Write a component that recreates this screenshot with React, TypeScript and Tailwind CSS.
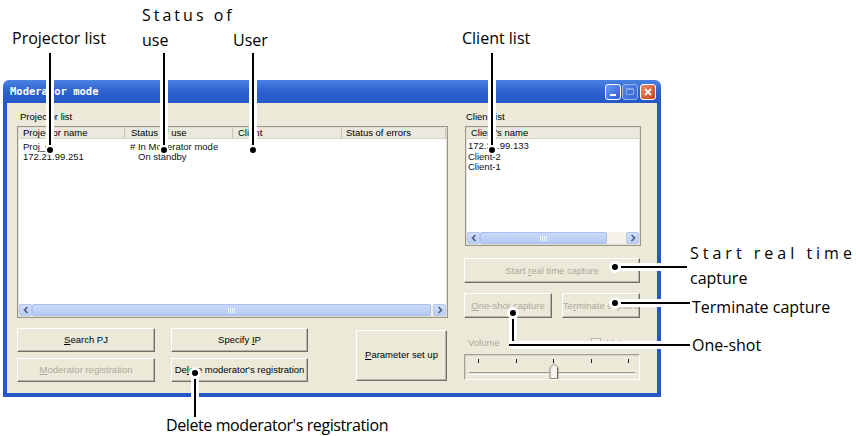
import type { ReactNode } from "react"

const UI = "font-['Liberation_Sans',Arial,sans-serif]"
const NOTE = "font-['Open_Sans',sans-serif] text-[16px] leading-[20px] text-black whitespace-nowrap"

function Btn({ children, disabled = false, className = "" }: { children: ReactNode; disabled?: boolean; className?: string }) {
  return (
    <div
      className={`flex items-center justify-center border border-t-white border-l-white border-r-[#716f64] border-b-[#716f64] bg-[#ECE9D8] shadow-[inset_-1px_-1px_0_#b9b6a8] text-[9.5px] leading-none whitespace-pre ${
        disabled ? "text-[#ADAA9C]" : "text-black"
      } ${className}`}
    >
      <span>{children}</span>
    </div>
  )
}

function Arrow({ dir }: { dir: "left" | "right" }) {
  return (
    <div className="w-[13px] h-full flex items-center justify-center rounded-[2px] border border-[#b3c6f0] bg-linear-to-b from-[#d3dffb] to-[#bccdf5]">
      <svg width="6" height="8" viewBox="0 0 6 8">
        <path
          d={dir === "left" ? "M4.5 1 L1.5 4 L4.5 7" : "M1.5 1 L4.5 4 L1.5 7"}
          fill="none"
          stroke="#4d6185"
          strokeWidth="1.7"
        />
      </svg>
    </div>
  )
}

function Thumb({ className }: { className: string }) {
  return (
    <div
      className={`h-full flex items-center justify-center gap-[1px] rounded-[2px] border border-[#a9bff0] bg-linear-to-b from-[#cddbfa] to-[#b5c9f3] ${className}`}
    >
      <div className="w-[1px] h-[5px] bg-[#eef3fe]" />
      <div className="w-[1px] h-[5px] bg-[#eef3fe]" />
      <div className="w-[1px] h-[5px] bg-[#eef3fe]" />
      <div className="w-[1px] h-[5px] bg-[#eef3fe]" />
    </div>
  )
}

function Header({ children, className = "" }: { children: ReactNode; className?: string }) {
  return (
    <div className={`h-full pl-[4px] border-r border-[#c7c4b6] shadow-[inset_0_-1px_0_#d8d5c7] ${className}`}>{children}</div>
  )
}

function Tick() {
  return <div className="w-[1px] h-[4px] bg-[#222]" />
}

export default function App() {
  return (
    <div className={`relative w-[856px] h-[436px] overflow-hidden bg-white pt-[80px] pl-[3px] ${UI}`}>
      {/* Window */}
      <div className="flex flex-col w-[658px] h-[317px]">
        <div className="flex items-center h-[23px] rounded-t-[6px] bg-linear-to-b from-[#4a82e2] via-[#2c62cc] to-[#2558c6] pl-[7px] pr-[5px]">
          <span className="font-['DejaVu_Sans_Mono',monospace] font-bold text-[10.5px] text-white">Moderator mode</span>
          <div className="ml-auto flex gap-[1px]">
            <div className="w-[16px] h-[16px] flex items-end pl-[4px] pb-[3px] rounded-[3px] border border-white bg-linear-to-br from-[#6b9bf2] to-[#2c5fd6]">
              <div className="w-[6px] h-[2px] bg-white" />
            </div>
            <div className="w-[16px] h-[16px] flex items-center justify-center rounded-[3px] border border-[#9ab6ee] bg-linear-to-br from-[#5787e6] to-[#3566d4]">
              <div className="w-[8px] h-[7px] border border-t-2 border-[#86a6ea]" />
            </div>
            <div className="ml-[1px] w-[16px] h-[16px] flex items-center justify-center rounded-[3px] border border-white bg-linear-to-br from-[#ec8d66] to-[#c8401c]">
              <svg width="8" height="8" viewBox="0 0 8 8">
                <path d="M1 1 L7 7 M7 1 L1 7" stroke="white" strokeWidth="1.8" />
              </svg>
            </div>
          </div>
        </div>

        <div className="flex-1 flex bg-[#ECE9D8] border-x-4 border-b-4 border-[#2558c6] pl-[10px] pt-[9px] text-[9.5px]">
          {/* Projector side */}
          <div className="w-[431px] flex flex-col">
            <div className="h-[10px] leading-[10px] pl-[3px] text-black">Projector list</div>
            <div className="mt-[4px] h-[192px] flex flex-col border border-[#9a978a] p-[1px] bg-[#e2dfd3]">
              <div className="flex h-[11px] leading-[10px] bg-[#EBE9DE] text-black">
                <Header className="w-[106px]">Projector name</Header>
                <Header className="w-[108px] pl-[6px]">Status of use</Header>
                <Header className="w-[109px] pl-[5px]">Client</Header>
                <Header className="flex-1">Status of errors</Header>
              </div>
              <div className="flex-1 flex bg-white pt-[3px] leading-[10px] text-[#111]">
                <div className="w-[106px] pl-[4px]">
                  <div>Proj_0</div>
                  <div>172.21.99.251</div>
                </div>
                <div className="w-[108px] pl-[5px]">
                  <div># In Moderator mode</div>
                  <div className="pl-[8px]">On standby</div>
                </div>
              </div>
              <div className="flex h-[12px] bg-[#F4F2EA]">
                <Arrow dir="left" />
                <Thumb className="w-[399px]" />
                <div className="w-[2px]" />
                <Arrow dir="right" />
              </div>
            </div>

            <div className="mt-[10px] flex">
              <div className="w-[138px] flex flex-col gap-[6px]">
                <Btn className="h-[24px]">
                  <span className="underline">S</span>earch PJ
                </Btn>
                <Btn disabled className="h-[24px]">
                  <span className="underline">M</span>oderator registration
                </Btn>
              </div>
              <div className="ml-[16px] w-[137px] flex flex-col gap-[6px]">
                <Btn className="h-[24px]">
                  Specify <span className="underline">I</span>P
                </Btn>
                <Btn className="h-[24px]">
                  De<span className="underline">l</span>ete moderator's registration
                </Btn>
              </div>
              <Btn className="ml-[48px] w-[91px] h-[51px] self-center">
                <span className="underline">P</span>arameter set up
              </Btn>
            </div>
          </div>

          {/* Client side */}
          <div className="ml-[16px] w-[177px] flex flex-col">
            <div className="h-[10px] leading-[10px] pl-[2px] text-black">Client list</div>
            <div className="ml-[1px] mt-[4px] h-[120px] flex flex-col border border-[#9a978a] p-[1px] bg-[#e2dfd3]">
              <div className="flex h-[11px] leading-[10px] bg-[#EBE9DE] text-black">
                <Header className="flex-1 border-r-0">Client's name</Header>
              </div>
              <div className="flex-1 bg-white pt-[2px] pl-[1px] leading-[10.5px] text-[#111]">
                <div>172.21.99.133</div>
                <div>Client-2</div>
                <div>Client-1</div>
              </div>
              <div className="flex h-[12px] bg-[#F4F2EA]">
                <Arrow dir="left" />
                <Thumb className="w-[127px]" />
                <div className="flex-1" />
                <Arrow dir="right" />
              </div>
            </div>

            <Btn disabled className="mt-[12px] h-[25px] w-[176px]">
              Start <span className="underline">r</span>eal time capture
            </Btn>
            <div className="mt-[10px] flex gap-[10px]">
              <Btn disabled className="w-[88px] h-[25px]">
                <span className="underline">O</span>ne-shot capture
              </Btn>
              <Btn disabled className="w-[78px] h-[25px]">
                Te<span className="underline">r</span>minate capture
              </Btn>
            </div>

            <div className="mt-[19px] h-[12px] flex items-center text-[#ADAA9C]">
              <span className="pl-[4px]">Volume</span>
              <div className="ml-auto mr-[14px] flex items-center gap-[5px]">
                <div className="w-[10px] h-[10px] border border-[#b8b5a8] bg-[#f3f2ec]" />
                <span>Mute</span>
              </div>
            </div>

            <div className="relative mt-[5px] w-[176px] h-[26px] border border-t-[#a5a294] border-l-[#a5a294] border-b-white border-r-white shadow-[inset_1px_1px_0_#d6d3c6]">
              <div className="mt-[4px] flex justify-between pl-[13px] pr-[10px]">
                <Tick />
                <Tick />
                <Tick />
                <Tick />
                <Tick />
              </div>
              <div className="mt-[9px] mx-[4px] h-[3px] border-t border-[#9d9a8d] border-b border-b-white bg-[#e4e1d5]" />
              <svg className="absolute left-[84px] top-[8px]" width="10" height="16" viewBox="0 0 10 16">
                <path d="M1 15.5 V4.5 L5 0.8 L9 4.5 V15.5 Z" fill="#f4f3ee" stroke="#8c897c" strokeWidth="1" />
                <path d="M8.5 4.8 V15" stroke="#6d6a5e" strokeWidth="1" />
              </svg>
            </div>
          </div>
        </div>
      </div>

      {/* Callouts on top */}
      <div className={`absolute left-[12px] top-[28px] ${NOTE}`}>Projector list</div>
      <div className={`absolute left-[142px] top-[5px] tracking-[3px] ${NOTE}`}>Status of</div>
      <div className={`absolute left-[142px] top-[30px] ${NOTE}`}>use</div>
      <div className={`absolute left-[233px] top-[30px] ${NOTE}`}>User</div>
      <div className={`absolute left-[462px] top-[28px] ${NOTE}`}>Client list</div>

      <div className="absolute left-[46px] top-[53px] w-[8px] h-[97px] bg-black border-x-[3px] border-white" />
      <div className="absolute left-[160px] top-[53px] w-[8px] h-[97px] bg-black border-x-[3px] border-white" />
      <div className="absolute left-[249px] top-[53px] w-[8px] h-[97px] bg-black border-x-[3px] border-white" />
      <div className="absolute left-[488px] top-[53px] w-[8px] h-[97px] bg-black border-x-[3px] border-white" />
      <div className="absolute left-[45px] top-[145px] w-[10px] h-[10px] rounded-full bg-black border-2 border-white" />
      <div className="absolute left-[159px] top-[145px] w-[10px] h-[10px] rounded-full bg-black border-2 border-white" />
      <div className="absolute left-[248px] top-[145px] w-[10px] h-[10px] rounded-full bg-black border-2 border-white" />
      <div className="absolute left-[487px] top-[145px] w-[10px] h-[10px] rounded-full bg-black border-2 border-white" />

      {/* Callouts on the right */}
      <div className={`absolute left-[690px] top-[243px] tracking-[4px] ${NOTE}`}>Start real time</div>
      <div className={`absolute left-[690px] top-[268px] ${NOTE}`}>capture</div>
      <div className={`absolute left-[692px] top-[297px] ${NOTE}`}>Terminate capture</div>
      <div className={`absolute left-[692px] top-[335px] ${NOTE}`}>One-shot</div>

      <div className="absolute left-[615px] top-[263px] w-[72px] h-[8px] bg-black border-y-[3px] border-white" />
      <div className="absolute left-[609px] top-[261px] w-[12px] h-[12px] rounded-full bg-black border-[3px] border-white" />
      <div className="absolute left-[615px] top-[299px] w-[75px] h-[8px] bg-black border-y-[3px] border-white" />
      <div className="absolute left-[609px] top-[297px] w-[12px] h-[12px] rounded-full bg-black border-[3px] border-white" />
      <div className="absolute left-[509px] top-[313px] w-[8px] h-[35px] bg-black border-x-[3px] border-white" />
      <div className="absolute left-[509px] top-[341px] w-[181px] h-[8px] bg-black border-y-[3px] border-white" />
      <div className="absolute left-[512px] top-[344px] w-[2px] h-[2px] bg-black" />
      <div className="absolute left-[507px] top-[307px] w-[12px] h-[12px] rounded-full bg-black border-[3px] border-white" />

      {/* Callout below */}
      <div className="absolute left-[191px] top-[373px] w-[8px] h-[44px] bg-black border-x-[3px] border-white" />
      <div className="absolute left-[189px] top-[367px] w-[12px] h-[12px] rounded-full bg-black border-[3px] border-white" />
      <div className={`absolute left-[166px] top-[415px] tracking-[-0.4px] ${NOTE}`}>Delete moderator's registration</div>
    </div>
  )
}
